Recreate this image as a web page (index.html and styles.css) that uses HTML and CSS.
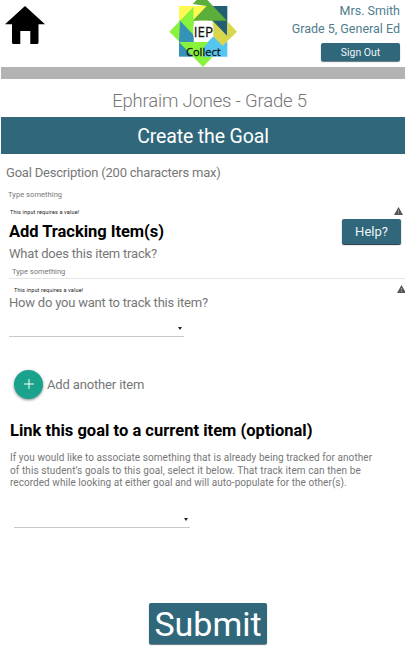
FILE: index.html
```
<!DOCTYPE html>
<html lang="en">
<head>
<meta charset="utf-8">
<title>Create the Goal</title>
<link rel="stylesheet" href="styles.css">
</head>
<body>
<header class="top">
  <svg class="home" viewBox="0 0 40 38"><path d="M20 0 40 18.3H33.5V36.5Q33.5 38 32 38H25.3V25H15.3V38H8.500Q7 38 7 36.500V18.300H0Z"/></svg>
  <svg class="logo" viewBox="27 0 207 201">
    <path fill="#fff952" d="M57 18H145V62H57Z"/>
    <path fill="#3592b6" d="M57 62H100V170H57Z"/>
    <path fill="#56c5ef" d="M100 170V126H130L160 98 202 126V170Z"/>
    <path fill="#225f73" d="M140 18H202V110H180L158 64Z"/>
    <path fill="#88f23d" d="M28 95 101 20V66L60 64 57 124Z"/>
    <path fill="#88f23d" d="M60 62H101V106Z"/>
    <path fill="#3592b6" d="M60 64 101 106V126H60Z"/>
    <path fill="#fff952" d="M101 18H128L142 30 101 62Z"/>
    <path fill="#5cae3b" d="M98 12 110 0H142L201 62H98L140 18Z"/>
    <path fill="#d9d64d" d="M202 64 231 95 188 137 158 108V62L202 108Z"/>
    <path fill="#56c5ef" d="M160 108V170H130V140Z"/>
    <path fill="#88f23d" d="M57 126H145L130 144V170H158L129 201Z"/>
    <path fill="#fff" d="M116 62H144L160 78V109L143 126H116L100 108V78Z"/>
    <text x="130" y="110" class="logo-name" textLength="58" lengthAdjust="spacingAndGlyphs">IEP</text>
    <text x="130" y="168" class="logo-sub" textLength="104" lengthAdjust="spacingAndGlyphs">Collect</text>
  </svg>
  <div class="user">
    <div class="name">Mrs. Smith</div>
    <div class="role">Grade 5, General Ed</div>
    <button class="btn sign-out">Sign Out</button>
  </div>
</header>
<div class="divider"></div>
<div class="student"><span>Ephraim Jones - Grade 5</span></div>
<h1 class="banner"><span>Create the Goal</span></h1>
<main>
  <div class="label goal"><span>Goal Description (200 characters max)</span></div>
  <div class="input first">Type something</div>
  <div class="error"><span>This input requires a value!</span><svg class="warn" viewBox="0 0 9 8"><path d="M4.500 0 9 8H0Z"/><path class="mark" d="M4.500 3V5.300M4.500 6V7"/></svg></div>
  <div class="tracking">
    <div>
      <h2 class="add">Add Tracking Item(s)</h2>
      <div class="label what">What does this item track?</div>
    </div>
    <button class="btn help">Help?</button>
  </div>
  <div class="input second">Type something</div>
  <div class="error lower"><span>This input requires a value!</span><svg class="warn" viewBox="0 0 9 8"><path d="M4.500 0 9 8H0Z"/><path class="mark" d="M4.500 3V5.300M4.500 6V7"/></svg></div>
  <div class="label how">How do you want to track this item?</div>
  <div class="select one"><i class="caret"></i></div>
  <div class="another">
    <span class="fab"><svg viewBox="0 0 10 10"><path d="M5 0V10M0 5H10"/></svg></span>
    <span>Add another item</span>
  </div>
  <h2 class="link">Link this goal to a current item (optional)</h2>
  <p class="info"><span class="l1">If you would like to associate something that is already being tracked for another</span><br><span class="l2">of this student’s goals to this goal, select it below. That track item can then be</span><br><span class="l3">recorded while looking at either goal and will auto-populate for the other(s).</span></p>
  <div class="select two"><i class="caret"></i></div>
  <button class="btn submit">Submit</button>
</main>
</body>
</html>
```

FILE: styles.css
```
* { box-sizing: border-box; }
body { margin: 0; width: 405px; height: 651px; overflow: hidden; background: #fff; color: #777; font-family: Roboto, sans-serif; white-space: nowrap; }
h1, h2, p { margin: 0; }
svg { display: block; }
.top { display: flex; height: 67px; }
.home { width: 40px; height: 38px; margin: 6px 0 0 5px; }
.logo { width: 69px; height: 67px; margin-left: 124px; }
.logo text { font-family: "Open Sans", sans-serif; text-anchor: middle; fill: #111; stroke: #111; stroke-width: .8; }
.logo-name { font-size: 43px; }
.logo-sub { font-size: 32px; font-weight: 500; }
.user { flex: 1; display: flex; flex-direction: column; align-items: flex-end; padding: 2px 5px 0 0; color: #4f7d8d; font-size: 12.5px; line-height: 18px; }
.btn { border: 0; padding: 0; border-radius: 2px; background: #30677a; color: #eef5f7; font-family: Roboto, sans-serif; box-shadow: 0 1px 1px #60757e; }
.sign-out { width: 79px; height: 18px; margin-top: 5px; font-size: 10.5px; line-height: 19px; }
.divider { height: 12px; margin-left: 1px; background: #b3b3b3; }
.student { height: 38px; padding: 3px 0 0 14px; line-height: 38px; text-align: center; font-size: 18.500px; font-weight: 300; letter-spacing: -.18px; color: #777; }
.banner { height: 37px; margin-left: 1px; background: #30677a; color: #fff; line-height: 39px; text-align: center; font-size: 19.500px; font-weight: 400; letter-spacing: -.14px; }
.label { font-size: 13px; line-height: 16px; letter-spacing: -.21px; }
.goal { margin: 11px 0 0 6px; }
.input { font-size: 7.500px; line-height: 10px; }
.first { margin: 9px 0 0 8px; letter-spacing: .06px; }
.error { display: flex; justify-content: space-between; height: 10px; margin: 7px 2px 0 10px; font-size: 5.500px; line-height: 10px; letter-spacing: .14px; color: #222; }
.warn { width: 9px; height: 8px; fill: #555; }
.mark { stroke: #bbb; stroke-width: .7; }
.tracking { display: flex; justify-content: space-between; height: 48px; padding: 2px 4px 0 9px; }
h2 { color: #000; font-size: 16.500px; font-weight: 700; line-height: 24px; }
.add { height: 27px; padding-top: 1px; letter-spacing: -.04px; }
.help { width: 59px; height: 25px; font-size: 13px; line-height: 24px; box-shadow: 0 1px 1px #1f3037; }
.second { height: 13px; margin: 1px 0 0 9px; padding: 1px 0 0 3px; border-bottom: 1px solid #e6e6e6; }
.lower { margin: 6px -1px 0 14px; }
.how { margin: 0 0 0 9px; }
.select { display: flex; align-items: flex-end; justify-content: flex-end; height: 26px; border-bottom: 1px solid #c9c9c9; padding: 0 2px 6px 0; }
.caret { width: 0; height: 0; border: 2px solid transparent; border-top: 3px solid #222; border-bottom: 0; }
.one { width: 175px; margin-left: 9px; }
.another { display: flex; align-items: center; gap: 4px; height: 30px; margin: 32px 0 0 14px; font-size: 13px; letter-spacing: -.15px; }
.fab { display: grid; place-items: center; width: 29px; height: 29px; border-radius: 50%; background: #1aa38c; box-shadow: 0 1px 3px #888; }
.fab svg { width: 10px; height: 10px; fill: none; stroke: #fff; stroke-width: 1; }
.link { margin: 20px 0 0 10px; letter-spacing: .02px; }
.info { margin: 9px 0 0 10px; font-size: 10px; line-height: 12.700px; }
.l1 { letter-spacing: .06px; }
.l2 { letter-spacing: .09px; }
.l3 { letter-spacing: .05px; }
.two { width: 176px; margin: 12px 0 0 14px; height: 26px; }
.submit { display: block; width: 118px; height: 41px; margin: 75px 0 0 149px; color: #fff; font-size: 34px; line-height: 43px; }
```
